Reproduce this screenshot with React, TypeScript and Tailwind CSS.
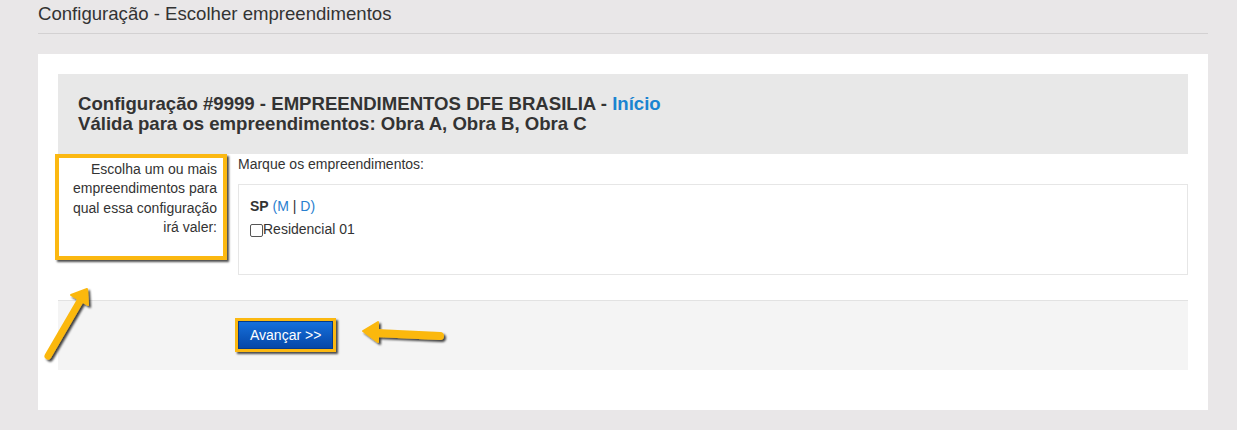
import React from 'react';

const Arrows: React.FC = () => {
  return (
    <svg
      className="absolute inset-0 pointer-events-none"
      width="1237"
      height="430"
      viewBox="0 0 1237 430"
    >
      <defs>
        <filter id="sh" x="-20%" y="-20%" width="140%" height="140%">
          <feDropShadow dx="2" dy="2" stdDeviation="1.2" floodColor="#000" floodOpacity="0.75" />
        </filter>
      </defs>
      <g filter="url(#sh)" fill="#fbb811" stroke="#fbb811" strokeLinecap="round" strokeLinejoin="round">
        {/* arrow pointing to the label box */}
        <line x1="48" y1="356" x2="80" y2="301" strokeWidth="7" />
        <polygon points="87,289 88,305 71,295" strokeWidth="2" />
        {/* arrow pointing to the button */}
        <line x1="440" y1="336" x2="376" y2="333" strokeWidth="8" />
        <polygon points="363,331 378,322 378,342" strokeWidth="2" />
      </g>
    </svg>
  );
};

const App: React.FC = () => {
  return (
    <div
      className="relative w-[1237px] h-[430px] bg-[#e9e7e8] px-[38px] pt-[2px] text-[#333] overflow-hidden"
      style={{ fontFamily: '"Liberation Sans", Arial, sans-serif' }}
    >
      <h1 className="text-[18.6px] leading-[24px] pb-[7px] border-b border-[#d3d1d2] w-[1170px]">
        Configuração - Escolher empreendimentos
      </h1>

      <div className="mt-[20px] w-[1170px] h-[356px] bg-white p-5">
        {/* header */}
        <div className="bg-[#e8e8e8] px-5 py-5 h-[80px] font-bold text-[18.6px] leading-[20px] text-[#333]">
          <div>
            Configuração #9999 - EMPREENDIMENTOS DFE BRASILIA -{' '}
            <a href="#" className="text-[#1a84d1]">Início</a>
          </div>
          <div>Válida para os empreendimentos: Obra A, Obra B, Obra C</div>
        </div>

        {/* body row */}
        <div className="flex text-[14px]">
          <div className="w-[180px] shrink-0">
            <div className="-ml-[3px] w-[172px] h-[106px] border-4 border-[#fbb811] shadow-[2px_2px_2px_rgba(0,0,0,0.7)] pt-[2px] pr-[6px] text-right leading-[19.3px] text-[#333]">
              Escolha um ou mais empreendimentos para qual essa configuração irá valer:
            </div>
          </div>
          <div className="flex-1">
            <div className="leading-[20px]">Marque os empreendimentos:</div>
            <div className="mt-[10px] h-[91px] border border-[#e6e6e6] px-[11px] pt-[11px]">
              <div className="leading-[20px] mb-[3px]">
                <b>SP</b>{' '}
                <span className="text-[#2a80cf]">
                  (<a href="#">M</a> <span className="text-[#333]">|</span> <a href="#">D</a>)
                </span>
              </div>
              <label className="flex items-center leading-[20px]">
                <span className="inline-block w-[13px] h-[13px] border border-[#555] rounded-[2px] bg-white mt-[2px]" />
                Residencial 01
              </label>
            </div>
          </div>
        </div>

        {/* footer */}
        <div className="mt-[25px] h-[70px] bg-[#f4f4f4] border-t border-[#e2e2e2] pl-[177px] pt-[17px]">
          <div className="inline-block border-[3px] border-[#fbb811] shadow-[2px_2px_2px_rgba(0,0,0,0.7)]">
            <button className="block h-[28px] px-[11px] text-[14px] text-white bg-gradient-to-b from-[#1670dc] to-[#0747a8] border border-[#063a8a]">
              Avançar &gt;&gt;
            </button>
          </div>
        </div>
      </div>

      <Arrows />
    </div>
  );
};

export default App;
